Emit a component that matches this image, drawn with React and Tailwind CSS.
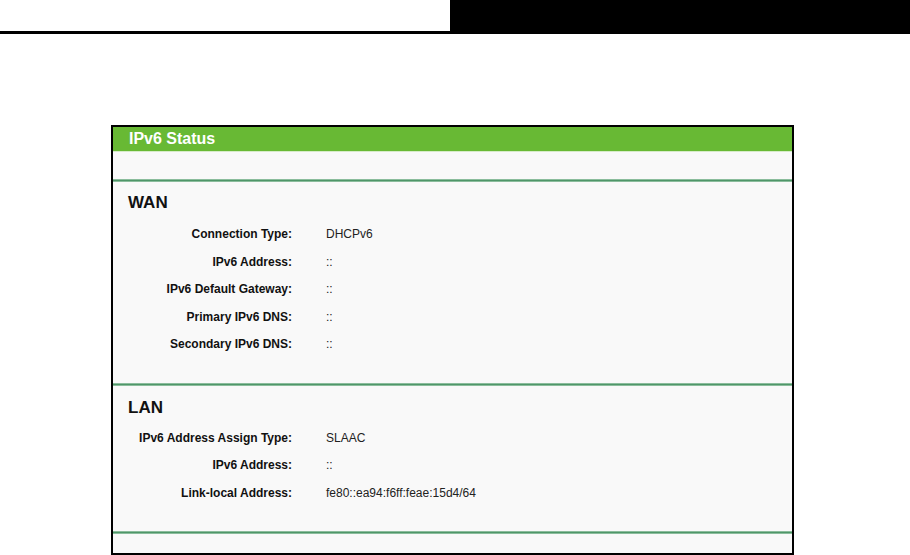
import React from "react";

const Line = () => (
  <div className="h-[3px] bg-[linear-gradient(#a9d0b6,#4f9669,#a9d0b6)]" />
);

const Row = ({ label, value }) => (
  <div className="flex h-[27.5px] items-center text-[12px] pt-px">
    <div className="w-[179px] shrink-0 text-right font-bold text-[#111]">{label}</div>
    <div className="pl-[34px] text-[#222]">{value}</div>
  </div>
);

export default function App() {
  return (
    <div
      className="w-[910px] h-[555px] bg-white overflow-hidden"
      style={{ fontFamily: '"Liberation Sans", Arial, sans-serif' }}
    >
      <div className="flex h-[34px]">
        <div className="w-[450px] border-b-[3px] border-black bg-white" />
        <div className="flex-1 bg-black" />
      </div>
      <div className="ml-[111px] mt-[91px] w-[683px] h-[430px] border-2 border-black bg-[#f9f9f9] flex flex-col">
        <div className="h-[24px] bg-[#68b934] flex items-center pl-[16px] text-white font-bold text-[16px]">
          IPv6 Status
        </div>
        <div className="h-px bg-[#d7ecc9]" />
        <div className="h-[27px]" />
        <Line />
        <div className="pt-[11px] pl-[15px] h-[20px] box-content flex items-center text-[17px] font-bold text-[#111]">
          WAN
        </div>
        <div className="h-[7px]" />
        <Row label="Connection Type:" value="DHCPv6" />
        <Row label="IPv6 Address:" value="::" />
        <Row label="IPv6 Default Gateway:" value="::" />
        <Row label="Primary IPv6 DNS:" value="::" />
        <Row label="Secondary IPv6 DNS:" value="::" />
        <div className="h-[25px]" />
        <Line />
        <div className="pt-[12px] pl-[15px] h-[20px] box-content flex items-center text-[17px] font-bold text-[#111]">
          LAN
        </div>
        <div className="h-[6px]" />
        <Row label="IPv6 Address Assign Type:" value="SLAAC" />
        <Row label="IPv6 Address:" value="::" />
        <Row label="Link-local Address:" value="fe80::ea94:f6ff:feae:15d4/64" />
        <div className="h-[25px]" />
        <Line />
      </div>
    </div>
  );
}
